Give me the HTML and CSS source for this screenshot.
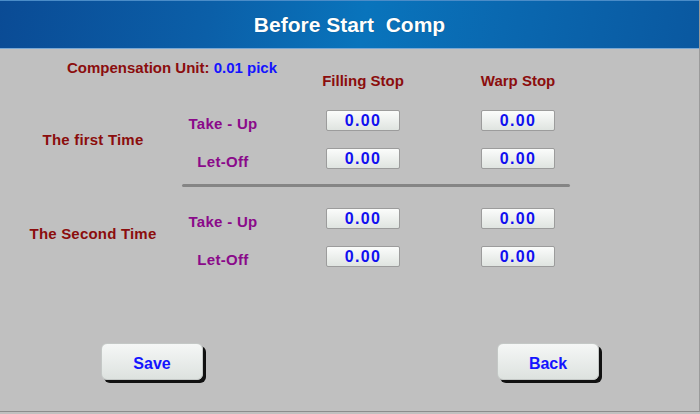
FILE: index.html
```html
<!DOCTYPE html>
<html lang="en">
<head>
  <meta charset="UTF-8">
  <title>Before Start Comp</title>
  <meta name="viewport" content="width=device-width, initial-scale=1.0">
  <link rel="stylesheet" href="styles.css">
</head>
<body>
  <div class="screen">
    <header class="title">Before Start&nbsp;&nbsp;Comp</header>

    <div class="top-row">
      <div class="unit">Compensation Unit: <span class="unit-val">0.01 pick</span></div>
      <div class="col-head c1">Filling Stop</div>
      <div class="col-head c2">Warp Stop</div>
    </div>

    <div class="section">
      <div class="time">The first Time</div>
      <div class="sub r1">Take - Up</div>
      <div class="box c1 r1">0.00</div>
      <div class="box c2 r1">0.00</div>
      <div class="sub r2">Let-Off</div>
      <div class="box c1 r2">0.00</div>
      <div class="box c2 r2">0.00</div>
    </div>

    <div class="divider"></div>

    <div class="section second">
      <div class="time">The Second Time</div>
      <div class="sub r1">Take - Up</div>
      <div class="box c1 r1">0.00</div>
      <div class="box c2 r1">0.00</div>
      <div class="sub r2">Let-Off</div>
      <div class="box c1 r2">0.00</div>
      <div class="box c2 r2">0.00</div>
    </div>

    <div class="buttons">
      <button class="btn">Save</button>
      <button class="btn">Back</button>
    </div>
  </div>
</body>
</html>
```

FILE: styles.css
```css
body {
  margin: 0;
  padding: 0;
  background: #c0c0c0;
  font-family: 'Liberation Sans', Arial, sans-serif;
  font-weight: bold;
}
.screen {
  width: 699px;
  height: 411px;
  background: #c0c0c0;
  border-right: 1px solid #9a9a9a;
  border-bottom: 1px solid #8c8c8c;
  overflow: hidden;
}
.title {
  height: 47px;
  line-height: 47px;
  border-top: 1px solid #4a8cc8;
  border-bottom: 1px solid #7aa8d4;
  background: linear-gradient(100deg, #0a4b95 0%, #0b5fa8 30%, #0974bc 52%, #0a68b0 72%, #0a58a0 100%);
  color: #fff;
  text-align: center;
  font-size: 21px;
  text-shadow: 0 0 1px rgba(0,0,0,0.4);
}
.top-row,
.section {
  display: grid;
  grid-template-columns: 186px 74px 206px 104px;
}
.top-row {
  height: 31px;
  margin-top: 10px;
}
.unit {
  grid-column: 1 / 3;
  grid-row: 1;
  padding-left: 67px;
  white-space: nowrap;
  font-size: 15px;
  line-height: 18px;
  color: #8b0d0d;
}
.unit-val {
  color: #1414ff;
}
.col-head {
  grid-row: 1;
  align-self: end;
  text-align: center;
  font-size: 15px;
  line-height: 18px;
  color: #8b0d0d;
}
.c1 { grid-column: 3; }
.c2 { grid-column: 4; }
.r1 { grid-row: 1; }
.r2 { grid-row: 2; }
.section {
  grid-template-rows: 21px 21px;
  row-gap: 17px;
  margin-top: 20px;
}
.second {
  margin-top: 21px;
}
.time {
  grid-column: 1;
  grid-row: 1 / 3;
  align-self: center;
  text-align: center;
  font-size: 15px;
  letter-spacing: 0.2px;
  color: #8b0d0d;
}
.second .time {
  margin-bottom: 8px;
}
.sub {
  grid-column: 2;
  text-align: center;
  white-space: nowrap;
  font-size: 15px;
  letter-spacing: 0.3px;
  line-height: 21px;
  padding-top: 3px;
  color: #8a0a8a;
}
.box {
  justify-self: center;
  width: 72px;
  height: 19px;
  border: 1px solid #9c9c9c;
  border-radius: 2px;
  background: linear-gradient(#fbfcfb, #dfe4e0);
  color: #1010f0;
  text-align: center;
  font-size: 16px;
  line-height: 20px;
  letter-spacing: 1.3px;
}
.divider {
  width: 388px;
  height: 3px;
  margin: 15px 0 0 182px;
  background: #858585;
  border-radius: 2px;
}
.buttons {
  display: flex;
  gap: 294px;
  padding-left: 101px;
  margin-top: 76px;
}
.btn {
  width: 102px;
  height: 37px;
  border: 1px solid #c4c8c6;
  border-radius: 6px;
  background: linear-gradient(#f5f7f6, #dde2df);
  box-shadow: 3px 3px 0 #111;
  color: #1414ff;
  font-family: 'Liberation Sans', Arial, sans-serif;
  font-weight: bold;
  font-size: 16px;
  padding: 4px 0 0;
}
```
